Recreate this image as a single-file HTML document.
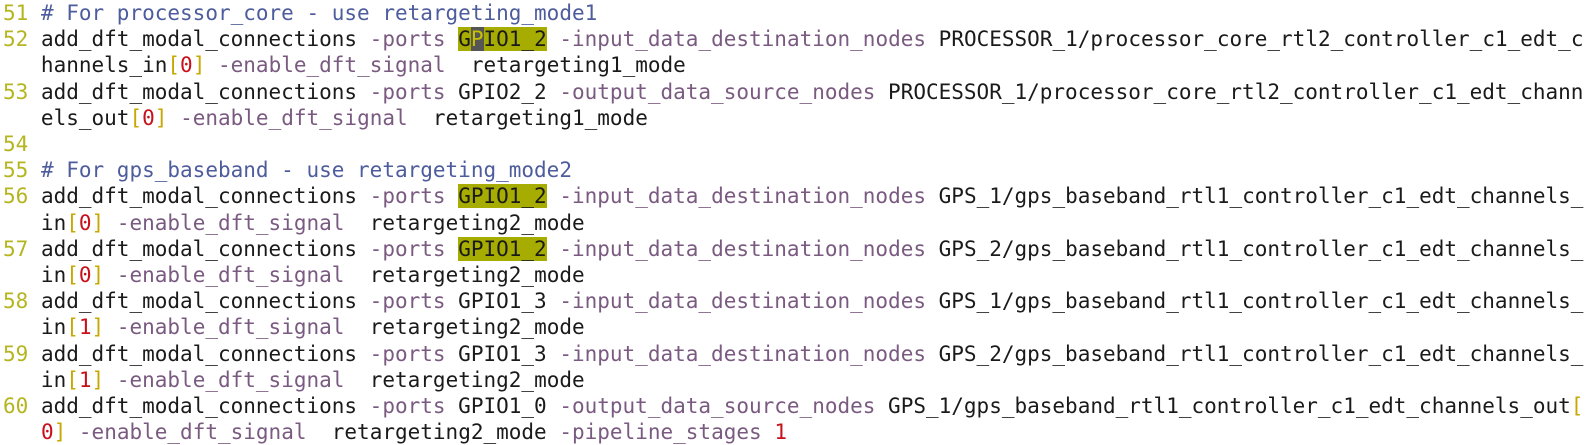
<!DOCTYPE html>
<html><head><meta charset="utf-8"><style>
html,body{margin:0;padding:0;background:#fff;width:1588px;height:444px;overflow:hidden}
pre{margin:0;padding:0 0 0 3px;position:absolute;top:0px;left:0;font-family:"DejaVu Sans Mono","Liberation Mono",monospace;font-size:21px;line-height:26.2px;color:#1a1a1a;white-space:pre}
.n{color:#b5b520}
.c{color:#4d5c9c}
.o{color:#7a5a80}
.b{color:#c8a800}
.r{color:#c8101a}
.h{background:#a6ad00}
.k{background:#555;color:#c8c000}
</style></head><body><pre><span class="n">51</span> <span class="c"># For processor_core - use retargeting_mode1</span>
<span class="n">52</span> add_dft_modal_connections <span class="o">-ports</span> <span class="h">G<span class="k">P</span>IO1_2</span> <span class="o">-input_data_destination_nodes</span> PROCESSOR_1/processor_core_rtl2_controller_c1_edt_c
   hannels_in<span class="b">[</span><span class="r">0</span><span class="b">]</span> <span class="o">-enable_dft_signal</span>  retargeting1_mode
<span class="n">53</span> add_dft_modal_connections <span class="o">-ports</span> GPIO2_2 <span class="o">-output_data_source_nodes</span> PROCESSOR_1/processor_core_rtl2_controller_c1_edt_chann
   els_out<span class="b">[</span><span class="r">0</span><span class="b">]</span> <span class="o">-enable_dft_signal</span>  retargeting1_mode
<span class="n">54</span>
<span class="n">55</span> <span class="c"># For gps_baseband - use retargeting_mode2</span>
<span class="n">56</span> add_dft_modal_connections <span class="o">-ports</span> <span class="h">GPIO1_2</span> <span class="o">-input_data_destination_nodes</span> GPS_1/gps_baseband_rtl1_controller_c1_edt_channels_
   in<span class="b">[</span><span class="r">0</span><span class="b">]</span> <span class="o">-enable_dft_signal</span>  retargeting2_mode
<span class="n">57</span> add_dft_modal_connections <span class="o">-ports</span> <span class="h">GPIO1_2</span> <span class="o">-input_data_destination_nodes</span> GPS_2/gps_baseband_rtl1_controller_c1_edt_channels_
   in<span class="b">[</span><span class="r">0</span><span class="b">]</span> <span class="o">-enable_dft_signal</span>  retargeting2_mode
<span class="n">58</span> add_dft_modal_connections <span class="o">-ports</span> GPIO1_3 <span class="o">-input_data_destination_nodes</span> GPS_1/gps_baseband_rtl1_controller_c1_edt_channels_
   in<span class="b">[</span><span class="r">1</span><span class="b">]</span> <span class="o">-enable_dft_signal</span>  retargeting2_mode
<span class="n">59</span> add_dft_modal_connections <span class="o">-ports</span> GPIO1_3 <span class="o">-input_data_destination_nodes</span> GPS_2/gps_baseband_rtl1_controller_c1_edt_channels_
   in<span class="b">[</span><span class="r">1</span><span class="b">]</span> <span class="o">-enable_dft_signal</span>  retargeting2_mode
<span class="n">60</span> add_dft_modal_connections <span class="o">-ports</span> GPIO1_0 <span class="o">-output_data_source_nodes</span> GPS_1/gps_baseband_rtl1_controller_c1_edt_channels_out<span class="b">[</span>
   <span class="r">0</span><span class="b">]</span> <span class="o">-enable_dft_signal</span>  retargeting2_mode <span class="o">-pipeline_stages</span> <span class="r">1</span></pre></body></html>
